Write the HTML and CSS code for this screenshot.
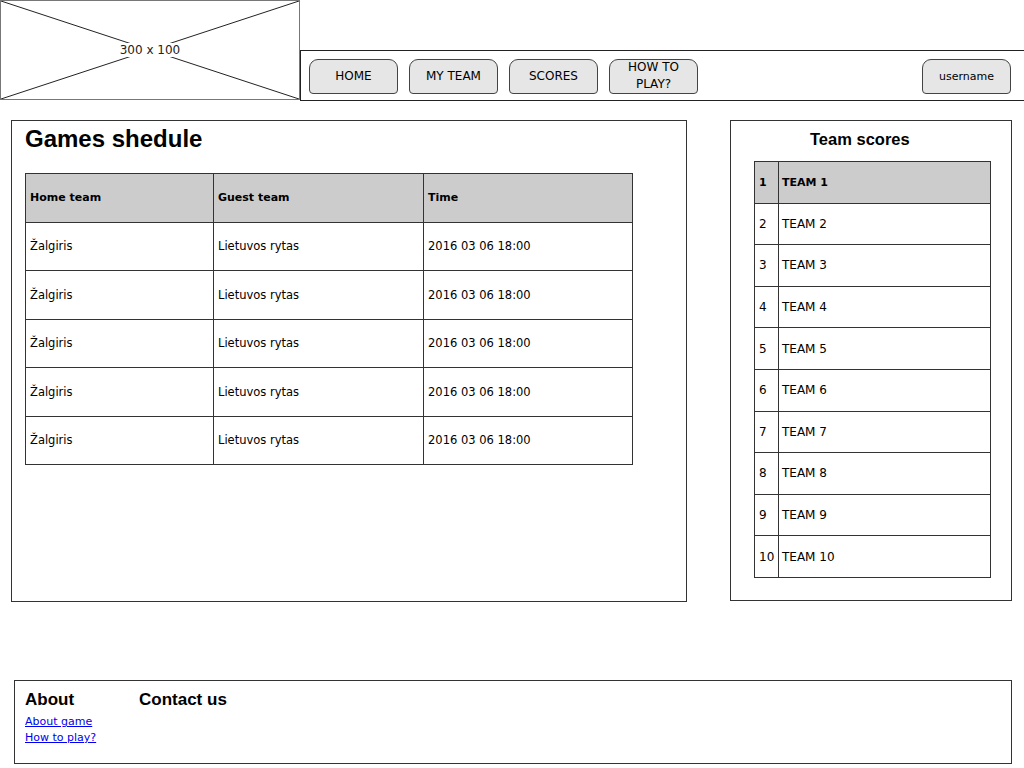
FILE: index.html
```html
<!DOCTYPE html>
<html lang="lt">
<head>
    <meta charset="UTF-8">
    <meta name="viewport" content="width=device-width, initial-scale=1.0">
    <title>Games shedule</title>
    <link rel="stylesheet" href="styles.css">
</head>
<body>
    <div class="header">
        <div class="logo">
            <svg class="logo-x" width="298" height="98" viewBox="0 0 298 98">
                <line x1="0" y1="0" x2="298" y2="98" stroke="#222" stroke-width="1"/>
                <line x1="0" y1="98" x2="298" y2="0" stroke="#222" stroke-width="1"/>
            </svg>
            <span class="logo-text">300 x 100</span>
        </div>
        <div class="nav">
            <a class="nav-btn">HOME</a>
            <a class="nav-btn">MY TEAM</a>
            <a class="nav-btn">SCORES</a>
            <a class="nav-btn">HOW TO<br>PLAY?</a>
            <a class="nav-btn user">username</a>
        </div>
    </div>

    <div class="main">
        <div class="panel schedule">
            <h1>Games shedule</h1>
            <table class="games">
                <tr class="head">
                    <td class="c1">Home team</td>
                    <td class="c2">Guest team</td>
                    <td>Time</td>
                </tr>
                <tr><td>Žalgiris</td><td>Lietuvos rytas</td><td>2016 03 06 18:00</td></tr>
                <tr><td>Žalgiris</td><td>Lietuvos rytas</td><td>2016 03 06 18:00</td></tr>
                <tr><td>Žalgiris</td><td>Lietuvos rytas</td><td>2016 03 06 18:00</td></tr>
                <tr><td>Žalgiris</td><td>Lietuvos rytas</td><td>2016 03 06 18:00</td></tr>
                <tr><td>Žalgiris</td><td>Lietuvos rytas</td><td>2016 03 06 18:00</td></tr>
            </table>
        </div>

        <div class="panel scores">
            <h2>Team scores</h2>
            <table class="teams">
                <tr class="head"><td class="num">1</td><td>TEAM 1</td></tr>
                <tr><td class="num">2</td><td>TEAM 2</td></tr>
                <tr><td class="num">3</td><td>TEAM 3</td></tr>
                <tr><td class="num">4</td><td>TEAM 4</td></tr>
                <tr><td class="num">5</td><td>TEAM 5</td></tr>
                <tr><td class="num">6</td><td>TEAM 6</td></tr>
                <tr><td class="num">7</td><td>TEAM 7</td></tr>
                <tr><td class="num">8</td><td>TEAM 8</td></tr>
                <tr><td class="num">9</td><td>TEAM 9</td></tr>
                <tr><td class="num">10</td><td>TEAM 10</td></tr>
            </table>
        </div>
    </div>

    <div class="footer">
        <div class="foot-col about">
            <h3>About</h3>
            <a href="#">About game</a>
            <a href="#">How to play?</a>
        </div>
        <div class="foot-col">
            <h3>Contact us</h3>
        </div>
    </div>
</body>
</html>
```

FILE: styles.css
```css
body {
    margin: 0;
    font-family: "DejaVu Sans", sans-serif;
    color: #000;
    background: #fff;
}
.header {
    display: flex;
    height: 100px;
}
.logo {
    position: relative;
    width: 298px;
    height: 98px;
    border: 1px solid #777;
    flex-shrink: 0;
    display: flex;
    align-items: center;
    justify-content: center;
}
.logo-x {
    position: absolute;
    left: 0;
    top: 0;
}
.logo-text {
    position: relative;
    background: #fff;
    padding: 0 2px;
    font-size: 12px;
    color: #222;
}
.nav {
    flex: 1;
    margin-top: 50px;
    height: 49px;
    border: 1px solid #222;
    border-right: none;
    display: flex;
    align-items: center;
    padding: 0 13px 0 8px;
}
.nav-btn {
    width: 87px;
    height: 33px;
    border: 1px solid #444;
    border-radius: 9px 9px 4px 4px;
    background: #e6e6e6;
    display: flex;
    align-items: center;
    justify-content: center;
    text-align: center;
    font-size: 12px;
    line-height: 17px;
    margin-right: 11px;
    margin-top: 1px;
}
.nav-btn.user {
    margin-left: auto;
    margin-right: 0;
    font-size: 11px;
}
.main {
    display: flex;
    align-items: flex-start;
    margin-top: 20px;
}
.panel {
    border: 1px solid #333;
    box-sizing: border-box;
}
.schedule {
    width: 676px;
    height: 482px;
    margin-left: 11px;
    padding: 0 0 0 13px;
}
.schedule h1 {
    font-family: "Liberation Sans", Arial, sans-serif;
    font-size: 24px;
    font-weight: bold;
    margin: 3px 0 0 0;
    line-height: 30px;
}
.games {
    border-collapse: collapse;
    margin-top: 19px;
    width: 608px;
    font-size: 11.5px;
}
.games td {
    border: 1px solid #333;
    height: 47.5px;
    padding: 0 4px;
    vertical-align: middle;
}
.games .c1 {
    width: 179px;
}
.games .c2 {
    width: 201px;
}
.head td {
    background: #cccccc;
    font-weight: bold;
    font-size: 11px;
}
.scores {
    width: 282px;
    height: 481px;
    margin-left: 43px;
    padding: 0 0 0 23px;
}
.scores h2 {
    font-family: "Liberation Sans", Arial, sans-serif;
    font-size: 16.5px;
    font-weight: bold;
    margin: 8px 0 0 56px;
    line-height: 20px;
}
.teams {
    border-collapse: collapse;
    margin-top: 12px;
    width: 237px;
    font-size: 12px;
}
.teams td {
    border: 1px solid #333;
    height: 40.6px;
    padding: 0 3px;
    vertical-align: middle;
}
.teams .num {
    width: 19px;
    padding: 0 0 0 4px;
}
.footer {
    display: flex;
    margin: 78px 0 0 14px;
    width: 998px;
    height: 84px;
    border: 1px solid #333;
    box-sizing: border-box;
    padding: 8px 10px;
}
.foot-col h3 {
    font-family: "Liberation Sans", Arial, sans-serif;
    font-size: 17px;
    font-weight: bold;
    margin: 0 0 3px 0;
    line-height: 22px;
}
.foot-col.about {
    width: 114px;
}
.foot-col a {
    display: block;
    color: #0000ee;
    font-size: 11px;
    line-height: 16px;
}
```
